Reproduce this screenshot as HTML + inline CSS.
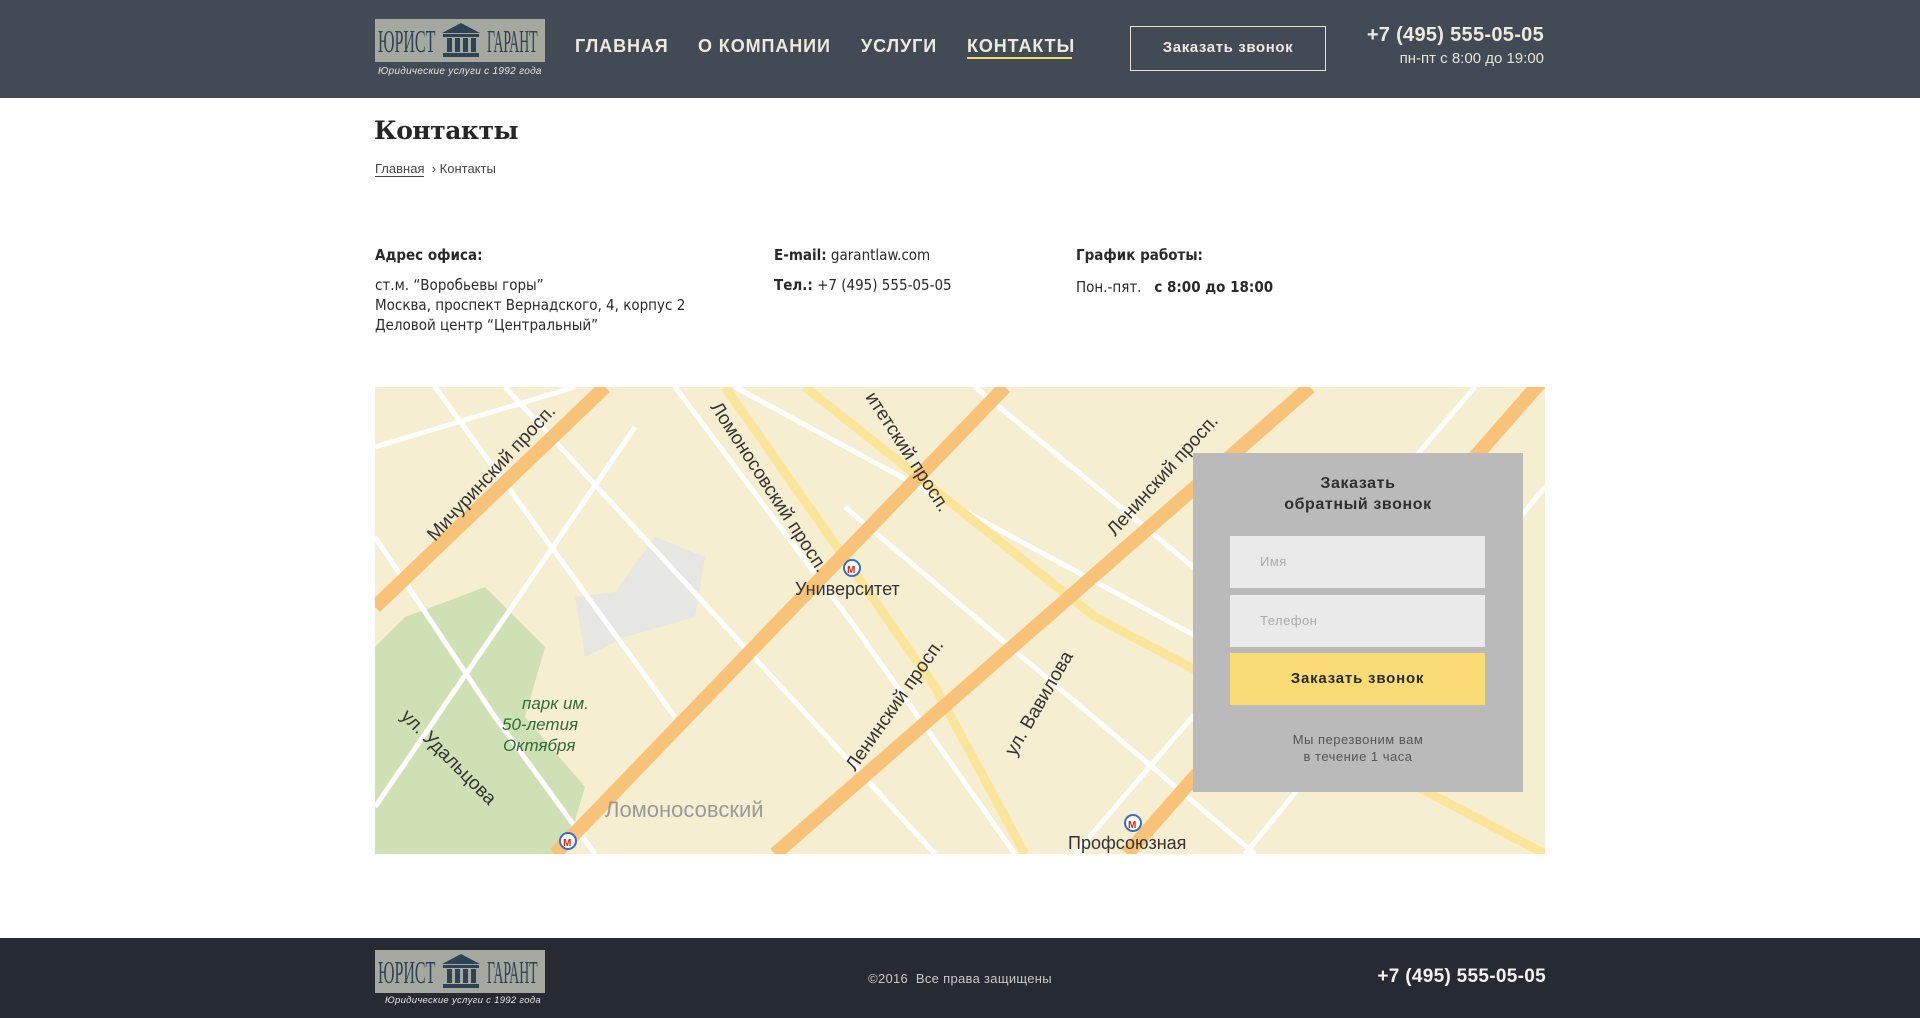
<!DOCTYPE html>
<html><head><meta charset="utf-8"><style>
*{margin:0;padding:0;box-sizing:border-box}
body{width:1920px;height:1018px;overflow:hidden;background:#fff;font-family:"Liberation Sans","DejaVu Sans",sans-serif;color:#2a2a2a;position:relative}
.abs{position:absolute}
header{position:absolute;left:0;top:0;width:1920px;height:98px;background:#424a56}
footer{position:absolute;left:0;top:938px;width:1920px;height:80px;background:#252a33}
.logo{position:absolute;width:170px;height:43px;background:#a5a89f;overflow:hidden}
.logo .w{position:absolute;top:4px;font-family:"Liberation Serif",serif;font-size:32px;color:#2e4255;transform-origin:left top;line-height:36px;white-space:nowrap}
.tag{position:absolute;font-style:italic;font-size:10px;color:#e8e8e0;white-space:nowrap;letter-spacing:.3px}
nav a{position:absolute;top:36px;font-weight:bold;font-size:18px;letter-spacing:.9px;color:#eeeadb;text-decoration:none;white-space:nowrap}
.lbl{font-weight:bold}
.info{position:absolute;font-size:15px;line-height:20px;color:#2a2a2a;font-family:"DejaVu Sans Condensed","Liberation Sans Narrow","Liberation Sans",sans-serif}
</style></head><body>
<header>
 <div class="logo" style="left:375px;top:19px">
  <div class="w" style="left:3px;transform:scaleX(.5)">ЮРИСТ</div>
  <svg class="abs" style="left:62px;top:3px" width="48" height="37" viewBox="0 0 42 37"><path d="M21 1L2 11H40Z" fill="#2e4255"/><rect x="3" y="12" width="36" height="3" fill="#2e4255"/><rect x="7" y="16" width="5" height="14" fill="#2e4255"/><rect x="15" y="16" width="5" height="14" fill="#2e4255"/><rect x="23" y="16" width="5" height="14" fill="#2e4255"/><rect x="31" y="16" width="5" height="14" fill="#2e4255"/><rect x="3" y="31" width="36" height="4" fill="#2e4255"/></svg>
  <div class="w" style="left:112px;transform:scaleX(.43)">ГАРАНТ</div>
 </div>
 <div class="tag" style="left:378px;top:66px">Юридические услуги с 1992 года</div>
 <nav>
  <a style="left:575px">ГЛАВНАЯ</a>
  <a style="left:698px">О КОМПАНИИ</a>
  <a style="left:861px">УСЛУГИ</a>
  <a style="left:967px">КОНТАКТЫ</a>
 </nav>
 <div class="abs" style="left:967px;top:57px;width:105px;height:2px;background:#f5d86a"></div>
 <div class="abs" style="left:1130px;top:26px;width:196px;height:45px;border:1.5px solid #e6e3d4;color:#eeeadb;font-weight:bold;font-size:15px;letter-spacing:.6px;text-align:center;line-height:42px">Заказать звонок</div>
 <div class="abs" style="right:376px;top:24px;font-weight:bold;font-size:20px;color:#eeeadb;letter-spacing:.3px">+7 (495) 555-05-05</div>
 <div class="abs" style="right:376px;top:50px;font-size:15px;color:#e6e3d4">пн-пт с 8:00 до 19:00</div>
</header>

<div class="abs" style="left:374px;top:116px;font-family:'DejaVu Serif','Liberation Serif',serif;font-weight:bold;font-size:25px;color:#262626;letter-spacing:-.5px">Контакты</div>
<div class="abs" style="left:375px;top:161px;font-size:13px;color:#444"><span style="border-bottom:1px solid #444">Главная</span> &nbsp;› Контакты</div>

<div class="info" style="left:375px;top:245px"><span class="lbl">Адрес офиса:</span></div>
<div class="info" style="left:375px;top:275px">ст.м. “Воробьевы горы”<br>Москва, проспект Вернадского, 4, корпус 2<br>Деловой центр “Центральный”</div>
<div class="info" style="left:774px;top:245px"><span class="lbl">E-mail:</span> garantlaw.com</div>
<div class="info" style="left:774px;top:275px"><span class="lbl">Тел.:</span> +7 (495) 555-05-05</div>
<div class="info" style="left:1076px;top:245px"><span class="lbl">График работы:</span></div>
<div class="info" style="left:1076px;top:277px">Пон.-пят. &nbsp; <span class="lbl">с 8:00 до 18:00</span></div>

<svg class="abs" style="left:375px;top:387px" width="1170" height="467" viewBox="0 0 1170 467">
 <rect width="1170" height="467" fill="#f6eed0"/>
 <path d="M30 230 L110 200 170 260 150 330 210 400 190 467 0 467 0 260Z" fill="#cfe0b4"/>
 <path d="M200 210 L240 205 280 150 330 170 320 230 250 250 210 270Z" fill="#e6e6e3"/>
 <g stroke="#fff" stroke-width="5" fill="none">
  <path d="M0 150 L120 330 220 467"/><path d="M60 0 L300 330"/><path d="M300 0 L480 240 640 467"/>
  <path d="M360 0 L1100 400"/><path d="M130 0 L560 467"/><path d="M470 120 L880 467"/>
  <path d="M600 0 L1000 330"/><path d="M0 420 L260 40"/><path d="M700 467 L1100 0"/>
  <path d="M870 467 L1170 100"/><path d="M0 60 L200 0"/>
 </g>
 <g stroke="#fbe59a" stroke-width="9" fill="none">
  <path d="M350 0 L560 300 650 467"/><path d="M430 0 L720 230 1170 467"/>
 </g>
 <g stroke="#f8c379" stroke-width="14" fill="none">
  <path d="M0 220 L230 0"/><path d="M180 467 L630 0"/><path d="M400 467 L935 0"/><path d="M752 467 L1170 -10"/>
 </g>
 <g font-family="Liberation Sans,sans-serif" font-size="19" fill="#333">
  <text x="60" y="155" transform="rotate(-47 60 155)">Мичуринский просп.</text>
  <text x="335" y="20" transform="rotate(57 335 20)">Ломоносовский просп.</text>
  <text x="490" y="10" transform="rotate(57 490 10)">итетский просп.</text>
  <text x="740" y="150" transform="rotate(-48 740 150)">Ленинский просп.</text>
  <text x="480" y="385" transform="rotate(-55 480 385)">Ленинский просп.</text>
  <text x="420" y="208" font-size="18">Университет</text>
  <text x="693" y="462" font-size="18">Профсоюзная</text>
  <text x="147" y="322" font-size="17" fill="#2d6b3a" font-style="italic">парк им.</text>
  <text x="127" y="343" font-size="17" fill="#2d6b3a" font-style="italic">50-летия</text>
  <text x="128" y="364" font-size="17" fill="#2d6b3a" font-style="italic">Октября</text>
  <text x="230" y="430" font-size="22" fill="#999">Ломоносовский</text>
  <text x="25" y="330" transform="rotate(45 25 330)">ул. Удальцова</text>
  <text x="640" y="370" transform="rotate(-60 640 370)">ул. Вавилова</text>
 </g>
 <circle cx="477" cy="181" r="8" fill="#fff" stroke="#3a6ec0" stroke-width="2"/><text x="472" y="186" font-size="10" fill="#d21" font-weight="bold" font-family="Liberation Sans">М</text>
 <circle cx="758" cy="436" r="8" fill="#fff" stroke="#3a6ec0" stroke-width="2"/><text x="753" y="441" font-size="10" fill="#d21" font-weight="bold" font-family="Liberation Sans">М</text>
 <circle cx="193" cy="454" r="8" fill="#fff" stroke="#3a6ec0" stroke-width="2"/><text x="188" y="459" font-size="10" fill="#d21" font-weight="bold" font-family="Liberation Sans">М</text>
</svg>

<div class="abs" style="left:1193px;top:453px;width:330px;height:339px;background:#bababb"></div>
<div class="abs" style="left:1193px;top:473px;width:330px;text-align:center;font-weight:bold;font-size:16px;line-height:21px;letter-spacing:.6px;color:#2f2f2f">Заказать<br>обратный звонок</div>
<div class="abs" style="left:1230px;top:536px;width:255px;height:52px;background:#ebeaea;padding-left:30px;line-height:52px;font-size:13px;color:#aaa;letter-spacing:.5px">Имя</div>
<div class="abs" style="left:1230px;top:595px;width:255px;height:52px;background:#ebeaea;padding-left:30px;line-height:52px;font-size:13px;color:#aaa;letter-spacing:.5px">Телефон</div>
<div class="abs" style="left:1230px;top:653px;width:255px;height:52px;background:#fbdb76;text-align:center;line-height:52px;font-weight:bold;font-size:15px;letter-spacing:.8px;color:#2a2a2a">Заказать звонок</div>
<div class="abs" style="left:1193px;top:731px;width:330px;text-align:center;font-size:13px;line-height:17px;letter-spacing:.5px;color:#555">Мы перезвоним вам<br>в течение 1 часа</div>

<footer>
 <div class="logo" style="left:375px;top:12px">
  <div class="w" style="left:3px;transform:scaleX(.5)">ЮРИСТ</div>
  <svg class="abs" style="left:62px;top:3px" width="48" height="37" viewBox="0 0 42 37"><path d="M21 1L2 11H40Z" fill="#2e4255"/><rect x="3" y="12" width="36" height="3" fill="#2e4255"/><rect x="7" y="16" width="5" height="14" fill="#2e4255"/><rect x="15" y="16" width="5" height="14" fill="#2e4255"/><rect x="23" y="16" width="5" height="14" fill="#2e4255"/><rect x="31" y="16" width="5" height="14" fill="#2e4255"/><rect x="3" y="31" width="36" height="4" fill="#2e4255"/></svg>
  <div class="w" style="left:112px;transform:scaleX(.43)">ГАРАНТ</div>
 </div>
 <div class="tag" style="left:385px;top:57px;font-size:9.5px">Юридические услуги с 1992 года</div>
 <div class="abs" style="left:0;width:1920px;top:33px;text-align:center;font-size:13px;color:#c9c9c9;letter-spacing:.3px">©2016 &nbsp;Все права защищены</div>
 <div class="abs" style="right:374px;top:28px;font-weight:bold;font-size:19px;color:#f2f2f2;letter-spacing:.3px">+7 (495) 555-05-05</div>
</footer>
</body></html>
